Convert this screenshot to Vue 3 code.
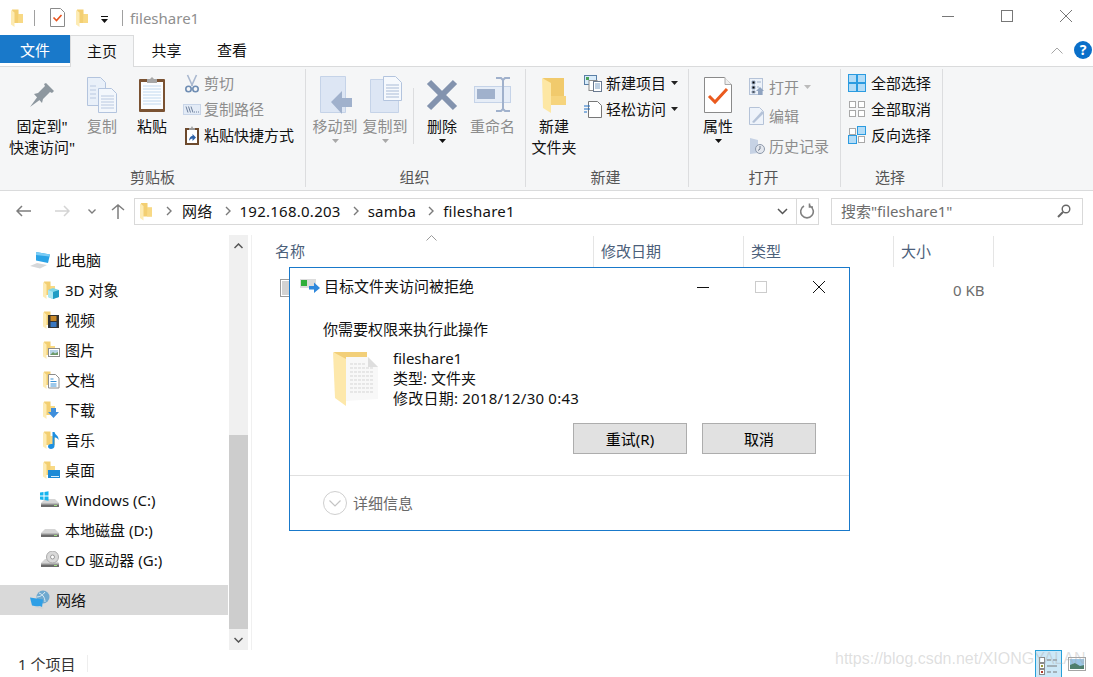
<template>
  <div class="win">
    <svg class="defs" width="0" height="0">
      <defs>
        <symbol id="folder" viewBox="0 0 12 18">
          <path d="M1 .5h6.500v4.500H12v9H3z" fill="#f3cf72" />
          <path d="M7.500 .5V5H12v9H7z" fill="#f8d985" />
          <path d="M0 1l3.500 2.500V18L0 15.500z" fill="#fdebb3" />
        </symbol>
        <symbol id="n3d" viewBox="0 0 17 18">
          <use href="#folder" width="12" height="18" />
          <path d="M5 9l5-2 6 2v7l-6 2-5-2z" fill="#7fd6e8" />
          <path d="M10 11l6-2v7l-6 2z" fill="#1f9cc4" />
          <path d="M5 9l5 2v7l-5-2z" fill="#a9e6f1" />
        </symbol>
        <symbol id="nvideo" viewBox="0 0 17 18">
          <use href="#folder" width="12" height="18" />
          <rect x="5" y="4" width="11" height="13" fill="#333" />
          <rect x="7.500" y="5" width="6" height="5" fill="#c98a2b" />
          <rect x="7.500" y="11" width="6" height="5" fill="#3a78c0" />
        </symbol>
        <symbol id="npic" viewBox="0 0 17 18">
          <use href="#folder" width="12" height="18" />
          <rect x="5.500" y="7.500" width="11" height="8" fill="#fff" stroke="#8c8c8c" />
          <rect x="7" y="9" width="8" height="5" fill="#b7d3e8" />
          <path d="M7 14l3-3 2 1.500 3-1.500v3z" fill="#6d9a6a" />
        </symbol>
        <symbol id="ndoc" viewBox="0 0 17 18">
          <use href="#folder" width="12" height="18" />
          <path d="M5.500 3.500h7l3.500 3.500v10H5.500z" fill="#fff" stroke="#8c8c8c" />
          <path d="M7.500 8h3M7.500 10.500h6M7.500 13h6M7.500 15h6" stroke="#3c93d6" />
        </symbol>
        <symbol id="ndown" viewBox="0 0 17 18">
          <use href="#folder" width="12" height="18" />
          <path d="M8 7h5v4h3l-5.500 6L5 11h3z" fill="#3f8fdc" />
        </symbol>
        <symbol id="nmusic" viewBox="0 0 17 18">
          <use href="#folder" width="12" height="18" />
          <path d="M9.500 1h2c.5 3 4.500 3.500 4 8-1-2-2.500-2.500-4-2.500V15c0 2-1.800 3-3.500 3S5 17 5 15.300s1.800-2.800 4.500-2.300z" fill="#1e8fe0" />
        </symbol>
        <symbol id="ndesk" viewBox="0 0 17 18">
          <use href="#folder" width="12" height="18" />
          <rect x="5" y="9" width="12" height="8" fill="#1d8ad6" />
          <rect x="8" y="15" width="8" height="1" fill="#d5ecfa" />
        </symbol>
        <symbol id="disk" viewBox="0 0 19 18">
          <path d="M1 12l4-4h10l4 4z" fill="#d5d5d5" />
          <path d="M1 12h18v4H1z" fill="#6c6c6c" />
          <path d="M1 12h18v1.500H1z" fill="#b8b8b8" />
          <rect x="14" y="14" width="3" height="1" fill="#9fe07f" />
        </symbol>
        <symbol id="nwin" viewBox="0 0 19 18">
          <use href="#disk" width="19" height="18" />
          <path d="M0 1.500l3.500-.5v3.500H0zM4.500 1l4-.7v4.200h-4zM0 5.500h3.500V9L0 8.500zM4.500 5.500h4v4.200l-4-.7z" fill="#16b4ee" />
        </symbol>
        <symbol id="ncd" viewBox="0 0 19 18">
          <use href="#disk" width="19" height="18" />
          <circle cx="12.500" cy="6" r="6" fill="#d9d9d9" stroke="#aaa" />
          <circle cx="12.500" cy="6" r="2" fill="#fff" stroke="#999" />
        </symbol>
        <symbol id="npc" viewBox="0 0 22 18">
          <path d="M0 15l7-3 10 2-7 3.500z" fill="#d6d8da" />
          <path d="M6 1l14 2.500-2 8.500L6 9.500z" fill="#2aa3e6" />
          <path d="M6 1l14 2.500-.5 2L6 4z" fill="#7accf5" />
        </symbol>
        <symbol id="nnet" viewBox="0 0 22 20">
          <circle cx="13" cy="7" r="6.500" fill="#6fa9cf" />
          <path d="M9 3c3 1 6 4 6 9M15 2c-2 3-5 5-8 5" stroke="#d8eaf4" fill="none" />
          <path d="M0 7.500l13 2-1 8-10-2z" fill="#2f9fe6" />
          <path d="M4 17l8 2 2-1-4-2z" fill="#cfd3d6" />
        </symbol>
        <symbol id="chev" viewBox="0 0 8 10">
          <path d="M2 1l4 4-4 4" fill="none" stroke="#7a7a7a" stroke-width="1.400" />
        </symbol>
        <symbol id="caret" viewBox="0 0 7 4">
          <path d="M0 0h7L3.500 4z" />
        </symbol>
      </defs>
    </svg>

    <header class="titlebar">
      <svg class="qa" width="12" height="18"><use href="#folder" /></svg>
      <span class="vsep"></span>
      <svg class="qa-check" width="15" height="19" viewBox="0 0 15 19">
        <path d="M.5 .5h10l4 4v14H.5z" fill="#fff" stroke="#8a8a8a" />
        <path d="M3.500 9.500l3 3 5-5.500" fill="none" stroke="#e8531d" stroke-width="1.600" />
      </svg>
      <svg class="qa-folder" width="12" height="18"><use href="#folder" /></svg>
      <svg class="qa-drop" width="7" height="7" viewBox="0 0 7 7">
        <rect y="0" width="7" height="1" fill="#111" />
        <path d="M0 3h7L3.500 7z" fill="#111" />
      </svg>
      <span class="vsep second"></span>
      <span class="title">fileshare1</span>
      <div class="winctl">
        <svg width="12" height="12" viewBox="0 0 12 12"><path d="M0 6.500h12" stroke="#777" /></svg>
        <svg width="12" height="12" viewBox="0 0 12 12"><rect x=".5" y=".5" width="11" height="11" fill="none" stroke="#777" /></svg>
        <svg width="12" height="12" viewBox="0 0 12 12"><path d="M0 0l12 12M12 0L0 12" stroke="#777" /></svg>
      </div>
    </header>

    <nav class="tabs">
      <span class="tab file">文件</span>
      <span class="tab active">主页</span>
      <span class="tab share">共享</span>
      <span class="tab view">查看</span>
      <svg class="collapse" width="12" height="7" viewBox="0 0 12 7"><path d="M.5 6.500L6 1l5.500 5.500" fill="none" stroke="#a5a5a5" /></svg>
      <span class="help">?</span>
    </nav>

    <section class="ribbon">
      <div class="rgroup g1">
        <div class="rbody">
          <div class="big w-pin">
            <div class="bigicon">
              <svg width="26" height="26" viewBox="0 0 26 26">
                <path d="M1 25l8-11 3 3z" fill="#8d979f" />
                <path d="M5 12l4-1 7-7-1-2 2-1 8 8-2 2-2-1-7 7-1 4z" fill="#8d979f" />
              </svg>
            </div>
            <span>固定到"<br />快速访问"</span>
          </div>
          <div class="big w-copy off">
            <div class="bigicon">
              <svg width="30" height="36" viewBox="0 0 30 36">
                <path d="M.5 .5h13l5 5v23H.5z" fill="#e9f0f9" stroke="#b3c4de" />
                <path d="M11.500 11.500h13l5 5v19h-18z" fill="#f3f7fc" stroke="#b3c4de" />
                <path d="M3 9h6M3 13h6M3 17h6M3 21h6M14 19h13M14 22h13M14 25h13M14 28h13M14 31h13" stroke="#b9c8e0" />
              </svg>
            </div>
            <span>复制</span>
          </div>
          <div class="big w-paste">
            <div class="bigicon">
              <svg width="28" height="37" viewBox="0 0 28 37">
                <rect x="1" y="3" width="26" height="33" rx="1" fill="#7a5232" />
                <rect x="3" y="6" width="22" height="27" fill="#fbfdff" />
                <path d="M5 10h18M5 13h18M5 16h18M5 19h18M5 22h18M5 25h18M5 28h18" stroke="#c2d9ef" />
                <path d="M9 7V3h3l2-2 2 2h3v4z" fill="#a7a7a7" />
              </svg>
            </div>
            <span>粘贴</span>
          </div>
          <div class="smalls col1">
            <div class="small off">
              <svg width="15" height="19" viewBox="0 0 15 19">
                <path d="M3 1l5 11M12 1L7 12" stroke="#a9b8cf" stroke-width="1.600" />
                <circle cx="4" cy="15" r="2.700" fill="none" stroke="#6f8db3" stroke-width="1.600" />
                <circle cx="11" cy="15" r="2.700" fill="none" stroke="#6f8db3" stroke-width="1.600" />
              </svg>
              剪切
            </div>
            <div class="small off">
              <svg width="18" height="11" viewBox="0 0 18 11">
                <rect x=".5" y=".5" width="17" height="10" fill="#e3ebf6" stroke="#c8d5e8" />
                <path d="M3 2.500l2 6M5.500 2.500l2 6M8 2.500l2 6" stroke="#6d7f9c" />
                <path d="M11 8h1M13 8h1M15 8h1" stroke="#6d7f9c" />
              </svg>
              复制路径
            </div>
            <div class="small">
              <svg width="14" height="19" viewBox="0 0 14 19">
                <rect x="0" y="2" width="14" height="17" fill="#6d4a2d" />
                <rect x="2" y="4" width="10" height="13" fill="#fff" />
                <path d="M4 4V2h2l1-2 1 2h2v2z" fill="#999" />
                <path d="M4 15c0-3 1.500-5 3.500-5V8l3.500 3.500L7.500 15v-2.500c-1.500 0-2.500 1-3.500 2.500z" fill="#2f62a8" />
              </svg>
              粘贴快捷方式
            </div>
          </div>
        </div>
        <div class="rlabel">剪贴板</div>
      </div>

      <div class="rgroup g2">
        <div class="rbody">
          <div class="big w-move off">
            <div class="bigicon">
              <svg width="33" height="38" viewBox="0 0 33 38">
                <path d="M1.500 .5h25v36h-25z" fill="#dde6f4" stroke="#c5d3e8" />
                <path d="M12 26L23 15v7h10v9H23v7z" fill="#a0b1cc" />
              </svg>
            </div>
            <span>移动到</span>
            <svg class="drop" width="7" height="4"><use href="#caret" fill="#a8a8a8" /></svg>
          </div>
          <div class="big w-move off">
            <div class="bigicon">
              <svg width="33" height="38" viewBox="0 0 33 38">
                <path d="M1.500 3.500h28v33h-28z" fill="#dde6f4" stroke="#c5d3e8" />
                <path d="M14.500 .5h12l6 6v18h-18z" fill="#f6f9fd" stroke="#b3c4de" />
                <path d="M17 9h13M17 12h13M17 15h13M17 18h13M17 21h13" stroke="#a9bbd6" />
              </svg>
            </div>
            <span>复制到</span>
            <svg class="drop" width="7" height="4"><use href="#caret" fill="#a8a8a8" /></svg>
          </div>
          <span class="innersep"></span>
          <div class="big w-del">
            <div class="bigicon">
              <svg width="32" height="32" viewBox="0 0 32 32">
                <path d="M3 3l26 26M29 3L3 29" stroke="#8393ae" stroke-width="6" />
              </svg>
            </div>
            <span>删除</span>
            <svg class="drop" width="7" height="4"><use href="#caret" fill="#111" /></svg>
          </div>
          <div class="big w-ren off">
            <div class="bigicon">
              <svg width="37" height="35" viewBox="0 0 37 35">
                <rect x=".5" y="9.500" width="36" height="16" fill="#e6edf7" stroke="#c5d3e8" />
                <rect x="3" y="12" width="18" height="10" fill="#a0b1cc" />
                <path d="M22 1h5l2 2 2-2h5M29 3v29M22 34h5l2-2 2 2h5" fill="none" stroke="#a0b1cc" stroke-width="2" />
              </svg>
            </div>
            <span>重命名</span>
          </div>
        </div>
        <div class="rlabel">组织</div>
      </div>

      <div class="rgroup g3">
        <div class="rbody">
          <div class="big w-move">
            <div class="bigicon">
              <svg width="24" height="36" viewBox="0 0 24 36">
                <path d="M1 1h21v27H9z" fill="#f1ca6c" />
                <path d="M0 1l9 5v30l-8-5z" fill="#fde7a4" />
                <path d="M9 19h15v9H9z" fill="#f6d47d" />
              </svg>
            </div>
            <span>新建<br />文件夹</span>
          </div>
          <div class="smalls col3">
            <div class="small">
              <svg width="18" height="17" viewBox="0 0 18 17">
                <rect x=".5" y=".5" width="12" height="9" fill="#d9ecfa" stroke="#5a7fa6" />
                <rect x="2" y="2" width="3" height="3" fill="#4aa35a" />
                <rect x="5" y="5.500" width="8" height="10" fill="#fff" stroke="#8c8c8c" />
                <rect x="9.500" y="6.500" width="8" height="10" fill="#fff" stroke="#6a7a90" />
                <path d="M11 9h5M11 11h5M11 13h5" stroke="#7d9fc4" />
              </svg>
              新建项目
              <svg class="mini" width="7" height="4"><use href="#caret" fill="#222" /></svg>
            </div>
            <div class="small">
              <svg width="18" height="17" viewBox="0 0 18 17">
                <path d="M4.500 .5h9l4 4v12h-13z" fill="#fff" stroke="#777" />
                <path d="M0 5h6M0 8h6M0 11h3" stroke="#1f6fc4" />
              </svg>
              轻松访问
              <svg class="mini" width="7" height="4"><use href="#caret" fill="#222" /></svg>
            </div>
          </div>
        </div>
        <div class="rlabel">新建</div>
      </div>

      <div class="rgroup g4">
        <div class="rbody">
          <div class="big w-move">
            <div class="bigicon">
              <svg width="28" height="36" viewBox="0 0 28 36">
                <path d="M.5 .5h20l7 7v28H.5z" fill="#fff" stroke="#8a8a8a" />
                <path d="M21 .5v7h6.500" fill="#eee" stroke="#aaa" />
                <path d="M5 19l6 6 12-13" fill="none" stroke="#ea5a1e" stroke-width="3" />
              </svg>
            </div>
            <span>属性</span>
            <svg class="drop" width="7" height="4"><use href="#caret" fill="#111" /></svg>
          </div>
          <div class="smalls col4">
            <div class="small off">
              <svg width="16" height="18" viewBox="0 0 16 18">
                <rect x=".5" y=".5" width="13" height="16" fill="#edf2f9" stroke="#b5c3d8" />
                <path d="M3 3h3v3H3zM3 8h3v3H3zM3 13h3v2H3zM8 4h4M8 9h2" stroke="#9fb0c8" />
                <path d="M7 13l4-4 4 4h-2v4H9v-4z" fill="#8fa3c0" />
              </svg>
              打开
              <svg class="mini" width="7" height="4"><use href="#caret" fill="#bbb" /></svg>
            </div>
            <div class="small off">
              <svg width="16" height="18" viewBox="0 0 16 18">
                <path d="M.5 .5h10l4 4v13H.5z" fill="#eef3fa" stroke="#b5c3d8" />
                <path d="M3 15L13 4l2 2L5 16z" fill="#b5c3d8" />
              </svg>
              编辑
            </div>
            <div class="small off">
              <svg width="16" height="18" viewBox="0 0 16 18">
                <path d="M1 1l8 2v13l-8 1z" fill="#c6d2e4" />
                <circle cx="11" cy="12" r="4.500" fill="#e3e7ee" stroke="#8c98aa" />
                <path d="M11 9v3l-2 1.500" fill="none" stroke="#6e7a8c" />
              </svg>
              历史记录
            </div>
          </div>
        </div>
        <div class="rlabel">打开</div>
      </div>

      <div class="rgroup g5">
        <div class="rbody">
          <div class="smalls col5">
            <div class="small">
              <svg width="18" height="18" viewBox="0 0 18 18">
                <rect x=".5" y=".5" width="8" height="8" fill="#b3dcf7" stroke="#2b9be0" />
                <rect x="9.500" y=".5" width="8" height="8" fill="#b3dcf7" stroke="#2b9be0" />
                <rect x=".5" y="9.500" width="8" height="8" fill="#b3dcf7" stroke="#2b9be0" />
                <rect x="9.500" y="9.500" width="8" height="8" fill="#b3dcf7" stroke="#2b9be0" />
              </svg>
              全部选择
            </div>
            <div class="small">
              <svg width="18" height="18" viewBox="0 0 18 18">
                <rect x="1.500" y="1.500" width="6" height="6" fill="#fff" stroke="#a8a8a8" />
                <rect x="10.500" y="1.500" width="6" height="6" fill="#fff" stroke="#a8a8a8" />
                <rect x="1.500" y="10.500" width="6" height="6" fill="#fff" stroke="#a8a8a8" />
                <rect x="10.500" y="10.500" width="6" height="6" fill="#fff" stroke="#a8a8a8" />
              </svg>
              全部取消
            </div>
            <div class="small">
              <svg width="18" height="18" viewBox="0 0 18 18">
                <rect x="1.500" y="2.500" width="6" height="6" fill="#fff" stroke="#a8a8a8" />
                <rect x="9.500" y=".5" width="8" height="8" fill="#b3dcf7" stroke="#2b9be0" />
                <rect x=".5" y="9.500" width="8" height="8" fill="#b3dcf7" stroke="#2b9be0" />
                <rect x="10.500" y="10.500" width="6" height="6" fill="#fff" stroke="#a8a8a8" />
              </svg>
              反向选择
            </div>
          </div>
        </div>
        <div class="rlabel">选择</div>
      </div>
    </section>

    <div class="addr">
      <svg class="back" width="15" height="12" viewBox="0 0 15 12"><path d="M6 1L1 6l5 5M1 6h14" fill="none" stroke="#7d7d7d" stroke-width="1.500" /></svg>
      <svg class="fwd" width="15" height="12" viewBox="0 0 15 12"><path d="M9 1l5 5-5 5M14 6H0" fill="none" stroke="#d4d4d4" stroke-width="1.500" /></svg>
      <svg class="hist" width="8" height="5" viewBox="0 0 8 5"><path d="M.5 .5L4 4 7.500 .5" fill="none" stroke="#7d7d7d" stroke-width="1.400" /></svg>
      <svg class="up" width="14" height="15" viewBox="0 0 14 15"><path d="M1 6l6-5 6 5M7 1v14" fill="none" stroke="#7d7d7d" stroke-width="1.500" /></svg>
      <div class="pathbox">
        <svg class="pfolder" width="12" height="19"><use href="#folder" /></svg>
        <template v-for="c in crumbs" :key="c">
          <svg class="pchev" width="8" height="10"><use href="#chev" /></svg>
          <span class="crumb">{{ c }}</span>
        </template>
        <span class="spacer"></span>
        <svg class="pdrop" width="11" height="7" viewBox="0 0 11 7"><path d="M1 1l4.500 4.500L10 1" fill="none" stroke="#555" stroke-width="1.500" /></svg>
        <span class="refresh">
          <svg width="15" height="16" viewBox="0 0 15 16"><path d="M10 3A6.300 6.300 0 1 1 4 3M9.500 .5v3.500H13" fill="none" stroke="#808080" stroke-width="1.600" /></svg>
        </span>
      </div>
      <div class="search">
        <span>搜索"fileshare1"</span>
        <svg width="14" height="14" viewBox="0 0 14 14"><circle cx="9" cy="5" r="3.800" fill="none" stroke="#666" stroke-width="1.400" /><path d="M6 8l-5 5" stroke="#666" stroke-width="2" /></svg>
      </div>
    </div>

    <div class="main">
      <aside class="tree">
        <template v-for="n in tree" :key="n.label">
          <div class="node" :class="n.cls">
            <svg :width="n.w" :height="n.h"><use :href="'#' + n.icon" :width="n.w" :height="n.h" /></svg>
            <span>{{ n.label }}</span>
          </div>
        </template>
      </aside>
      <div class="vbar">
        <div class="vbtn">
          <svg width="9" height="6" viewBox="0 0 9 6"><path d="M.5 5L4.500 1l4 4" fill="none" stroke="#555" stroke-width="1.500" /></svg>
        </div>
        <div class="vtrack"></div>
        <div class="vthumb"></div>
        <div class="vbtn">
          <svg width="9" height="6" viewBox="0 0 9 6"><path d="M.5 1L4.500 5l4-4" fill="none" stroke="#555" stroke-width="1.500" /></svg>
        </div>
      </div>
      <div class="list">
        <svg class="sort" width="11" height="6" viewBox="0 0 11 6"><path d="M.5 5.500l5-5 5 5" fill="none" stroke="#9a9a9a" /></svg>
        <div class="cols">
          <span class="col name">名称</span>
          <span class="col date">修改日期</span>
          <span class="col type">类型</span>
          <span class="col size">大小</span>
        </div>
        <div class="row">
          <svg width="11" height="18" viewBox="0 0 11 18">
            <rect x=".5" y=".5" width="14" height="17" fill="#fff" stroke="#9a9a9a" />
            <path d="M2 3h10M2 5h10M2 7h10M2 9h10M2 11h10M2 13h10M2 15h10" stroke="#a5a5a5" />
          </svg>
          <span class="kb">0 KB</span>
        </div>
      </div>
    </div>

    <footer class="status">
      <span class="count">1 个项目</span>
      <span class="stsep"></span>
      <span class="spacer"></span>
      <span class="viewbtn">
        <svg width="19" height="19" viewBox="0 0 19 19">
          <rect x=".5" y=".5" width="5" height="5" fill="#fff" stroke="#8a8a8a" />
          <rect x=".5" y="6.500" width="5" height="5" fill="#fff" stroke="#8a8a8a" />
          <rect x=".5" y="12.500" width="5" height="5" fill="#fff" stroke="#8a8a8a" />
          <rect x="2" y="8" width="2" height="2" fill="#9a9a3a" />
          <rect x="2" y="14" width="2" height="2" fill="#b0392b" />
          <path d="M8 3h4M14 3h4M8 9h10M8 15h4M14 15h4" stroke="#7a7a7a" />
        </svg>
      </span>
      <svg class="thumbview" width="18" height="14" viewBox="0 0 18 14">
        <rect x=".5" y=".5" width="17" height="13" fill="#fff" stroke="#a5a5a5" />
        <rect x="2" y="2" width="14" height="10" fill="#9cc6e6" />
        <path d="M2 12V8l5-2 5 3 4-1v4z" fill="#4f7f6d" />
      </svg>
    </footer>

    <div class="mark">https://blog.csdn.net/XIONGYALAN</div>

    <div class="dialog">
      <div class="dtitle">
        <svg width="20" height="14" viewBox="0 0 20 14">
          <rect x="0" y="0" width="16" height="9" fill="#dcdcdc" />
          <rect x="1" y="1" width="6" height="6" fill="#2fae3a" />
          <path d="M9 7h5V3.500L20 9l-6 5v-3.500H9z" fill="#2f88dc" />
        </svg>
        <span class="dname">目标文件夹访问被拒绝</span>
        <div class="dctl">
          <svg width="12" height="12" viewBox="0 0 12 12"><path d="M0 6.500h12" stroke="#111" /></svg>
          <svg width="12" height="12" viewBox="0 0 12 12"><rect x=".5" y=".5" width="11" height="11" fill="none" stroke="#ccc" /></svg>
          <svg width="12" height="12" viewBox="0 0 12 12"><path d="M0 0l12 12M12 0L0 12" stroke="#111" /></svg>
        </div>
      </div>
      <p class="dmsg">你需要权限来执行此操作</p>
      <div class="dinfo">
        <svg width="46" height="56" viewBox="0 0 46 56">
          <path d="M1 2h33v46H12z" fill="#f2cf79" />
          <path d="M13 7h22l10 10v32l-32 2z" fill="#f8f8f8" />
          <path d="M35 7v10h10z" fill="#dedede" />
          <path d="M17 14h15M17 18h24M17 22h24M17 26h24M17 30h24M17 34h24M17 38h24M17 42h24" stroke="#d5d5d5" stroke-dasharray="3 1" />
          <path d="M0 2l13 7v47L2 48z" fill="#fde8ab" />
        </svg>
        <div class="dtext">
          <div>fileshare1</div>
          <div>类型: 文件夹</div>
          <div class="dmod">修改日期: 2018/12/30 0:43</div>
        </div>
      </div>
      <div class="dbtns">
        <button class="dbtn">重试(R)</button>
        <button class="dbtn">取消</button>
      </div>
      <div class="dfoot">
        <span class="dcircle">
          <svg width="12" height="7" viewBox="0 0 12 7"><path d="M.5 .5L6 6l5.500-5.500" fill="none" stroke="#c4c4c4" stroke-width="1.200" /></svg>
        </span>
        <span class="dmore">详细信息</span>
      </div>
    </div>
  </div>
</template>

<script setup>
const crumbs = ['网络', '192.168.0.203', 'samba', 'fileshare1']

const tree = [
  { label: '此电脑', icon: 'npc', w: 22, h: 18, cls: 'top' },
  { label: '3D 对象', icon: 'n3d', w: 17, h: 18, cls: 'sub' },
  { label: '视频', icon: 'nvideo', w: 17, h: 18, cls: 'sub' },
  { label: '图片', icon: 'npic', w: 17, h: 18, cls: 'sub' },
  { label: '文档', icon: 'ndoc', w: 17, h: 18, cls: 'sub' },
  { label: '下载', icon: 'ndown', w: 17, h: 18, cls: 'sub' },
  { label: '音乐', icon: 'nmusic', w: 17, h: 18, cls: 'sub' },
  { label: '桌面', icon: 'ndesk', w: 17, h: 18, cls: 'sub' },
  { label: 'Windows (C:)', icon: 'nwin', w: 19, h: 18, cls: 'drive' },
  { label: '本地磁盘 (D:)', icon: 'disk', w: 19, h: 18, cls: 'drive' },
  { label: 'CD 驱动器 (G:)', icon: 'ncd', w: 19, h: 18, cls: 'drive' },
  { label: '网络', icon: 'nnet', w: 22, h: 20, cls: 'top net' }
]
</script>

<style>
html, body { margin: 0; background: #fff; overflow: hidden; }
</style>

<style scoped>
.win {
  position: relative;
  width: 1093px;
  height: 677px;
  display: flex;
  flex-direction: column;
  overflow: hidden;
  background: #fff;
  color: #111;
  font: 15px/20px "Noto Sans", "Noto Sans CJK SC", sans-serif;
}
.defs { position: absolute; }
.spacer { flex: 1; }

/* title bar */
.titlebar { height: 35px; display: flex; align-items: center; padding-left: 11px; flex: none; }
.vsep { width: 1px; height: 16px; background: #a0a0a0; margin-left: 11px; }
.vsep.second { margin-left: 14px; }
.qa-check { margin-left: 15px; }
.qa-folder { margin-left: 11px; }
.qa-drop { margin-left: 13px; margin-top: 3px; }
.title { margin-left: 7px; color: #8f8f8f; font-size: 15px; }
.winctl { margin-left: auto; display: flex; gap: 47px; padding-right: 21px; margin-top: -3px; }

/* tabs */
.tabs { height: 32px; display: flex; flex: none; align-items: flex-start; border-bottom: 1px solid #dadbdc; box-sizing: border-box; position: relative; }
.tab { height: 28px; line-height: 30px; text-align: center; }
.tab.file { width: 70px; background: #1979ca; color: #fff; }
.tab.active { width: 64px; height: 32px; box-sizing: border-box; border: 1px solid #dadbdc; border-bottom: 0; background: #f5f6f7; }
.tab.share { width: 65px; }
.tab.view { width: 66px; }
.collapse { margin-left: auto; margin-top: 12px; margin-right: 5px; }
.help {
  width: 18px; height: 18px; border-radius: 50%;
  background: #0a6fc9; color: #fff; text-align: center;
  font-size: 14px; line-height: 18px; font-weight: 700;
  margin: 6px 1px 0 6px;
}

/* ribbon */
.ribbon { height: 124px; flex: none; display: flex; background: #f5f6f7; border-bottom: 1px solid #dadbdc; box-sizing: border-box; }
.rgroup { box-sizing: border-box; margin: 2px 0 3px; border-right: 1px solid #dcdddf; display: flex; flex-direction: column; }
.g1 { width: 306px; padding-left: 4px; }
.g2 { width: 220px; padding-left: 4px; }
.g3 { width: 163px; padding-left: 3px; }
.g4 { width: 152px; padding-left: 4px; }
.g5 { width: 102px; padding-left: 7px; }
.rbody { flex: 1; display: flex; align-items: flex-start; min-height: 0; }
.rlabel { height: 20px; line-height: 20px; text-align: center; color: #555; padding-right: 6px; }
.g1 .rlabel { padding-right: 4px; }
.g5 .rlabel { padding-right: 10px; }
.big { display: flex; flex-direction: column; align-items: center; text-align: center; padding-top: 5px; line-height: 21px; }
.bigicon { height: 41px; margin-bottom: 1px; display: flex; align-items: center; justify-content: center; }
.big.off { color: #8d8d8d; }
.w-pin { width: 76px; }
.w-copy { width: 44px; }
.w-paste { width: 56px; }
.w-move { width: 50px; }
.w-del { width: 50px; }
.w-ren { width: 49px; margin-left: 1px; }
.drop { margin-top: 2px; }
.innersep { width: 1px; height: 56px; background: #dcdddf; margin: 19px 3px 0 3px; }
.smalls { display: flex; flex-direction: column; padding-top: 1px; }
.small { height: 26px; display: flex; align-items: center; white-space: nowrap; }
.small svg:first-child { margin-right: 4px; flex: none; }
.small.off { color: #8d8d8d; }
.mini { margin-left: 5px; }
.col1 { margin-left: 3px; }
.col1 .small svg:first-child { width: 18px; margin-right: 3px; }
.col3 { margin-left: 5px; }
.col4 { margin-left: 6px; padding-top: 3px; }
.col4 .small { height: 29.5px; }
.col5 .small svg:first-child { margin-right: 5px; }

/* address row */
.addr { height: 44px; flex: none; display: flex; align-items: center; padding-bottom: 4px; box-sizing: border-box; }
.back { margin-left: 16px; }
.fwd { margin-left: 24px; }
.hist { margin-left: 18px; }
.up { margin-left: 15px; }
.pathbox {
  margin-left: 9px; width: 685px; height: 27px; box-sizing: border-box;
  border: 1px solid #d9d9d9; display: flex; align-items: center;
  padding-left: 5px;
}
.pchev { margin: 0 8px 0 11px; }
.pfolder + .pchev { margin-left: 13px; margin-right: 9px; }
.crumb { white-space: nowrap; letter-spacing: .25px; }
.pdrop { margin-right: 4px; }
.refresh { width: 21px; height: 25px; border-left: 1px solid #d9d9d9; display: flex; align-items: center; justify-content: center; margin-left: 4px; }
.search {
  margin-left: 12px; width: 252px; height: 27px; box-sizing: border-box;
  border: 1px solid #d9d9d9; display: flex; align-items: center;
  justify-content: space-between; padding: 0 11px 0 9px; color: #6d6d6d;
}

/* main area */
.main { flex: 1; display: flex; min-height: 0; }
.tree { width: 229px; flex: none; padding-top: 10px; box-sizing: border-box; }
.node { height: 30px; display: flex; align-items: center; white-space: nowrap; margin-right: 1px; }
.node.top { padding-left: 30px; gap: 4px; }
.node.sub { padding-left: 43px; gap: 5px; }
.node.drive { padding-left: 40px; gap: 6px; }
.node.net { margin-top: 10px; background: #d9d9d9; }
.vbar { width: 19px; flex: none; background: #f0f0f0; display: flex; flex-direction: column; }
.vbtn { height: 21px; flex: none; display: flex; align-items: center; justify-content: center; }
.vtrack { height: 179px; flex: none; }
.vthumb { flex: 1; background: #cdcdcd; }
.list { flex: 1; margin-left: 3px; border-left: 1px solid #f0f0f0; position: relative; }
.sort { position: absolute; left: 174px; top: 0; }
.cols { height: 32px; display: flex; }
.col { color: #4c607a; padding-left: 7px; box-sizing: border-box; line-height: 30px; border-right: 1px solid #e5e5e5; margin-top: 1px; }
.col.name { width: 342px; padding-left: 23px; }
.col.date, .col.type { width: 150px; }
.col.size { width: 100px; }
.row { position: relative; height: 30px; padding: 12px 0 0 28px; box-sizing: border-box; }
.kb { position: absolute; left: 701px; top: 13px; color: #6d6d6d; }

/* status bar */
.status { height: 27px; flex: none; display: flex; align-items: center; }
.count { margin-left: 18px; color: #333; }
.stsep { width: 1px; height: 17px; background: #eee; margin-left: 12px; }
.viewbtn {
  width: 27px; height: 27px; box-sizing: border-box; background: #cce8f7;
  border: 1px solid #26a0da; border-bottom: 0; display: flex; justify-content: center;
  align-items: flex-end; padding-bottom: 1px;
}
.thumbview { margin: 0 7px 0 6px; }
.mark {
  position: absolute; left: 835px; top: 650px; color: rgba(170, 170, 170, .38);
  font: 16px/18px "Liberation Sans", sans-serif; white-space: nowrap;
}

/* dialog */
.dialog {
  position: absolute; left: 289px; top: 267px; width: 561px; height: 264px;
  box-sizing: border-box; background: #fff; border: 1px solid #1979ca;
  display: flex; flex-direction: column;
}
.dtitle { height: 36px; flex: none; display: flex; align-items: center; padding-left: 10px; }
.dname { margin-left: 4px; font-size: 15px; }
.dctl { margin-left: auto; display: flex; gap: 46px; padding-right: 24px; align-items: center; margin-top: 2px; }
.dmsg { margin: 15px 0 0 33px; color: #111; }
.dinfo { display: flex; margin: 11px 0 0 43px; align-items: flex-start; }
.dtext { margin-left: 14px; margin-top: -2px; }
.dmod { letter-spacing: .22px; }
.dbtns { display: flex; gap: 15px; margin: 15px 33px 0 auto; }
.dbtn {
  width: 114px; height: 31px; box-sizing: border-box; background: #e1e1e1;
  border: 1px solid #adadad; font: inherit; color: #000; padding: 0;
}
.dfoot {
  margin-top: auto; height: 55px; flex: none; border-top: 1px solid #e0e0e0;
  display: flex; align-items: center; padding-left: 33px; box-sizing: border-box;
}
.dcircle {
  width: 24px; height: 24px; box-sizing: border-box; border: 1px solid #cfcfcf;
  border-radius: 50%; display: flex; align-items: center; justify-content: center;
}
.dmore { margin-left: 6px; color: #6a6a6a; }
</style>
